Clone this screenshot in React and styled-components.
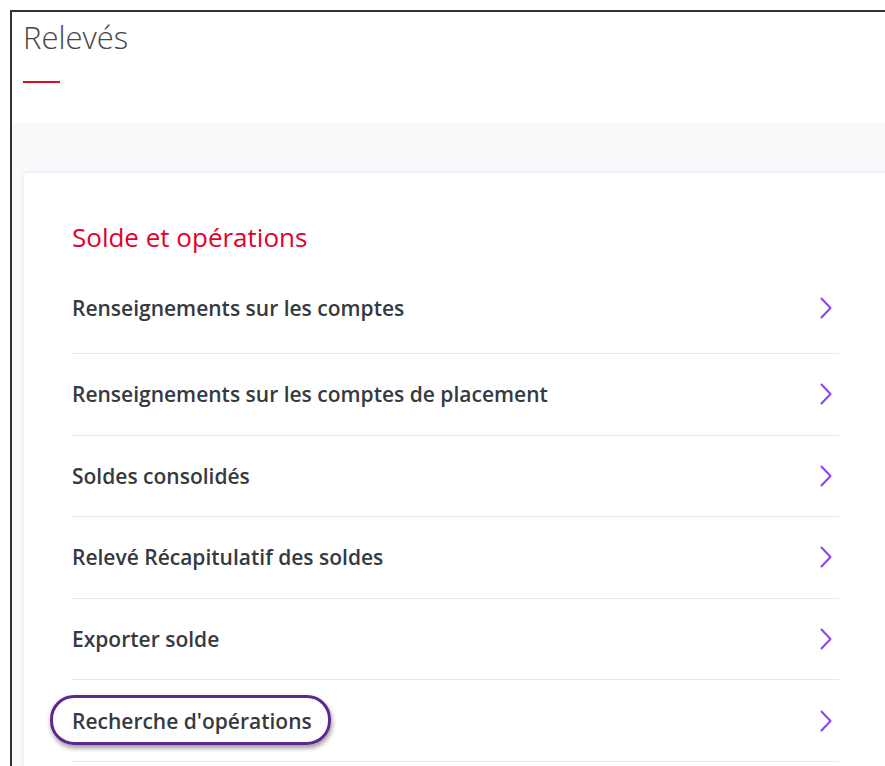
import React from "react";
import styled, { createGlobalStyle } from "styled-components";

const GlobalStyle = createGlobalStyle`
  html, body {
    margin: 0;
    padding: 0;
    background: #ffffff;
    overflow: hidden;
  }
  body {
    font-family: "Open Sans", "Noto Sans", sans-serif;
  }
`;

const Frame = styled.div`
  margin: 10px 0 0 10px;
  border-top: 2px solid #333333;
  border-left: 2px solid #333333;
  height: 756px;
  box-sizing: border-box;
  display: flex;
  flex-direction: column;
`;

const Header = styled.header`
  background: #ffffff;
  padding: 5px 0 0 11px;
  height: 111px;
  flex-shrink: 0;
  box-sizing: border-box;
`;

const PageTitle = styled.h1`
  margin: 0;
  font-size: 31px;
  line-height: 40px;
  font-weight: 300;
  color: #454545;
`;

const Accent = styled.div`
  width: 37px;
  height: 2px;
  margin-top: 24px;
  background: #e30d21;
`;

const Body = styled.main`
  flex: 1;
  background: #f8f9fb;
  padding: 50px 0 0 12px;
  overflow: hidden;
`;

const Card = styled.section`
  background: #ffffff;
  width: 1000px;
  min-height: 700px;
  border-radius: 4px 0 0 0;
  box-shadow: 0 0 0 1px #eceef3, -1px -1px 4px rgba(0, 0, 0, 0.04);
  padding: 46px 0 0 48px;
  box-sizing: border-box;
`;

const SectionTitle = styled.h2`
  margin: 0 0 13px;
  font-size: 26px;
  line-height: 36px;
  font-weight: 400;
  color: #e4002b;
`;

const List = styled.ul`
  list-style: none;
  margin: 0;
  padding: 0;
  width: 767px;
`;

const Row = styled.li`
  display: flex;
  align-items: center;
  justify-content: space-between;
  height: ${(p) => (p.$first ? "86px" : "81.6px")};
  padding-bottom: ${(p) => (p.$first ? "4.5px" : "0")};
  box-sizing: border-box;
  border-bottom: 1.5px solid #e6e9f1;
  padding-right: 6px;
`;

const Label = styled.span`
  position: relative;
  display: inline-block;
  font-size: 21px;
  line-height: 28px;
  font-weight: 600;
  color: #363a3f;
`;

/* purple callout ring drawn over one label */
const Ring = styled.span`
  position: absolute;
  left: -22px;
  right: -19px;
  top: -12px;
  bottom: -10px;
  border: 3px solid #5b2a8c;
  border-radius: 24px;
  box-shadow: 1px 3px 5px rgba(0, 0, 0, 0.4);
  pointer-events: none;
`;

const Chevron = () => (
  <svg width="14" height="22" viewBox="0 0 14 22" fill="none">
    <path d="M2.5 1.5 L11.5 11 L2.5 20.5" stroke="#8b42f4" strokeWidth="2" strokeLinecap="round" strokeLinejoin="round" />
  </svg>
);

const items = [
  { label: "Renseignements sur les comptes" },
  { label: "Renseignements sur les comptes de placement" },
  { label: "Soldes consolidés" },
  { label: "Relevé Récapitulatif des soldes" },
  { label: "Exporter solde" },
  { label: "Recherche d'opérations", marked: true },
];

export default function App() {
  return (
    <>
      <GlobalStyle />
      <Frame>
        <Header>
          <PageTitle>Relevés</PageTitle>
          <Accent />
        </Header>
        <Body>
          <Card>
            <SectionTitle>Solde et opérations</SectionTitle>
            <List>
              {items.map((item, i) => (
                <Row key={item.label} $first={i === 0}>
                  <Label>
                    {item.label}
                    {item.marked && <Ring />}
                  </Label>
                  <Chevron />
                </Row>
              ))}
            </List>
          </Card>
        </Body>
      </Frame>
    </>
  );
}
